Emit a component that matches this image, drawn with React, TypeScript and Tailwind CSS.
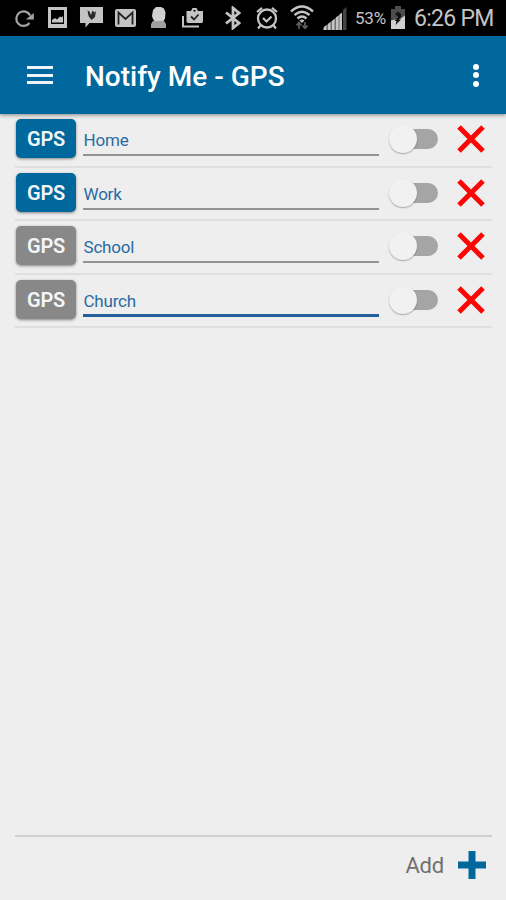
import React, { useState } from "react";
import { clsx } from "clsx";

interface Place {
  name: string;
  armed: boolean;
  focused?: boolean;
}

const PLACES: Place[] = [
  { name: "Home", armed: true },
  { name: "Work", armed: true },
  { name: "School", armed: false },
  { name: "Church", armed: false, focused: true },
];

function StatusBar() {
  return (
    <div className="flex h-9 shrink-0 items-start bg-black text-[#c4c4c4]">
      {/* Refresh */}
      <svg className="ml-[14px] mt-2 h-5 w-5 shrink-0 text-[#a3a3a3]" viewBox="0 0 20 20" fill="none">
        <path d="M16.200 7.500A7.300 7.300 0 1 0 15.500 15" stroke="currentColor" strokeWidth="2.200" />
        <path d="M19.800 5v6.500h-8z" fill="currentColor" />
      </svg>
      {/* Picture */}
      <svg className="ml-[14px] mt-[7px] h-[21px] w-[19px] shrink-0" viewBox="0 0 19 21">
        <path fill="currentColor" fillRule="evenodd" d="M0 0h19v21H0zM3 3v14h13V3z" />
        <path fill="currentColor" d="M4 15.500V13l3-2 2 1.500 3-3 1.500 1L15 9v6.500z" />
      </svg>
      {/* Message */}
      <svg className="ml-[13px] mt-[7px] h-[21px] w-[23px] shrink-0" viewBox="0 0 23 21">
        <path fill="currentColor" d="M0 0h23v16H9.500l-4 4.500V16H0z" />
        <path fill="#2a2a2a" d="M7.500 3.500l2 1L11 8l1.500-4.500 2 2L16 4l-1 6-3.500 3-3-4z" />
      </svg>
      {/* Mail */}
      <svg className="ml-[12px] mt-[9px] h-[18px] w-[21px] shrink-0" viewBox="0 0 21 18">
        <rect width="21" height="18" rx="2" fill="currentColor" />
        <path d="M3.500 15.500V3.500l7 6.500 7-6.500v12" fill="none" stroke="#222" strokeWidth="1.800" />
      </svg>
      {/* Bust */}
      <svg className="ml-[15px] mt-[7px] h-[21px] w-[15px] shrink-0" viewBox="0 0 15 21">
        <path fill="#d0d0d0" d="M5 0h5l3 1.500 1.500 4-.500 6-2 3.500H4l-2-3-1-3 1-6z" />
        <path fill="#a0a0a0" d="M2 14h11l2 3v4H0v-4z" />
      </svg>
      {/* Store */}
      <svg className="ml-4 mt-2 h-5 w-[21px] shrink-0" viewBox="0 0 21 20">
        <path fill="currentColor" fillRule="evenodd" d="M4.500 3H9L10.500 0h4L16 3h5v10.500L20 15H5.500l-1-1.500zM11.500 2v1.500h2V2z" />
        <path d="M9 8.500l3 3 4.500-5" fill="none" stroke="#222" strokeWidth="1.800" />
        <path d="M1 8v10.500h16" fill="none" stroke="currentColor" strokeWidth="2" />
      </svg>
      {/* Bluetooth */}
      <svg className="ml-[22px] mt-[6px] h-6 w-4 shrink-0" viewBox="0 0 16 24" fill="none">
        <path d="M1 6.500l13 10.500-6 5V2l6 5L1 17.500" stroke="currentColor" strokeWidth="2.800" />
      </svg>
      {/* Alarm */}
      <svg className="ml-[15px] mt-[6px] h-6 w-[22px] shrink-0" viewBox="0 0 22 24" fill="none">
        <circle cx="11" cy="12.500" r="9" stroke="currentColor" strokeWidth="2.300" />
        <path d="M1 6l5-4.200M21 6l-5-4.200M4.500 19.500L2 22.500M17.500 19.500l2.500 3" stroke="currentColor" strokeWidth="2.200" />
        <path d="M7 12l3.500 3.500 5-5" stroke="currentColor" strokeWidth="2.200" />
      </svg>
      {/* Wi-Fi */}
      <svg className="ml-[12px] mt-[5px] h-6 w-6 shrink-0" viewBox="0 0 24 24" fill="none">
        <path d="M1 6.500Q12-3.500 23 6.500M4.500 10q7.500-6.500 15 0M7.500 13.500q4.500-4 9 0" stroke="currentColor" strokeWidth="2.400" />
        <path d="M9.500 15.500q2.500-2 5 0L12 18z" fill="currentColor" />
        <path d="M9 24v-6m-2.500 2.500L9 17.500l2.500 3M15 17v6m-2.500-2.500l2.500 3 2.500-3" stroke="#5c5c5c" strokeWidth="1.800" />
      </svg>
      {/* Signal */}
      <svg className="ml-[9px] mt-[6px] h-6 w-6 shrink-0" viewBox="0 0 24 24" fill="currentColor">
        <path fill="#707070" d="M0 22L18 7.500V24H0z" />
        <path d="M1 21l2.500-2v5H1zM5 18l2.500-2v8H5zM9 15l2.500-2v11H9zM13 11.500l2.500-2V24H13zM16.500 8.500l2.500-2V24h-2.500z" />
        <path fill="#454545" d="M20 4l3.500-3v23H20z" />
      </svg>
      <span className="ml-[8px] mt-[7px] w-[33px] shrink-0 whitespace-nowrap text-[17px] leading-[23px] tracking-[-0.2px]">
        53%
      </span>
      {/* Battery */}
      <svg className="ml-[3px] mt-[6px] h-6 w-[14px] shrink-0" viewBox="0 0 14 24">
        <path fill="#4c4c4c" d="M4 0h6v3h4v12H0V3h4z" />
        <path fill="#d0d0d0" d="M0 14.500l4-1 3 1 7-5v13.500H0z" />
        <path fill="#111" d="M4 8l3-2.500L10 8v3l-2.500 2.500h2.500L4.500 19l1-4H3.500l4-4z" />
      </svg>
      <span className="ml-[9px] mt-[5px] whitespace-nowrap text-[23px] leading-7 tracking-[-0.7px]">6:26 PM</span>
    </div>
  );
}

function Toolbar() {
  return (
    <header className="z-10 flex h-[78px] shrink-0 items-center bg-[#00689d] px-[27px] text-white shadow-[0_1px_4px_rgba(0,0,0,0.45)]">
      <button aria-label="Menu" className="flex w-[26px] flex-col gap-[4.500px]">
        <span className="h-[3px] w-full bg-[#edf4fa]" />
        <span className="h-[3px] w-full bg-[#edf4fa]" />
        <span className="h-[3px] w-full bg-[#edf4fa]" />
      </button>
      <h1 className="ml-8 mt-[3px] whitespace-nowrap text-[28px] font-medium leading-8">
        Notify Me - GPS
      </h1>
      <button aria-label="More" className="ml-auto flex flex-col gap-[2.500px]">
        <span className="h-[6px] w-[6px] rounded-full bg-white" />
        <span className="h-[6px] w-[6px] rounded-full bg-white" />
        <span className="h-[6px] w-[6px] rounded-full bg-white" />
      </button>
    </header>
  );
}

function Toggle({ on, onChange }: { on: boolean; onChange: () => void }) {
  return (
    <button role="switch" aria-checked={on} onClick={onChange} className="ml-[10px] mt-[11px] flex h-7 w-[49px] items-center">
      <span className={clsx("z-10 h-7 w-7 shrink-0 rounded-full bg-[#f1f1f1] shadow-[0_1px_1.500px_rgba(0,0,0,0.3)]", on && "order-2")} />
      <span className="-ml-4 h-5 w-[37px] shrink-0 rounded-full bg-[#a5a5a5]" />
    </button>
  );
}

function PlaceRow({ place }: { place: Place }) {
  const [on, setOn] = useState(false);

  return (
    <li className="flex h-[53.500px] items-start border-b-2 border-[#dfdfdf]">
      <button
        className={clsx(
          "ml-px mt-[5px] h-[39px] w-[60px] shrink-0 rounded-[5px] text-[20px] font-semibold leading-[41px] tracking-[-0.2px] text-[#f3f6f8] shadow-[0_1px_3px_rgba(0,0,0,0.45)]",
          place.armed ? "bg-[#00689d]" : "bg-[#888888]"
        )}
      >
        GPS
      </button>
      <div
        className={clsx(
          "ml-[7px] flex h-[42px] w-[296px] shrink-0 items-end pl-[0.500px] text-[17px] leading-5 tracking-[-0.2px] text-[#2a6ba3]",
          place.focused ? "border-b-3 border-[#23609b] pb-[3px]" : "border-b-2 border-[#939393] pb-[4px]"
        )}
      >
        <span>{place.name}</span>
      </div>
      <Toggle on={on} onChange={() => setOn(!on)} />
      <button aria-label="Delete" className="ml-[19px] mt-[11px] h-7 w-7 shrink-0">
        <svg viewBox="0 0 28 28" className="h-7 w-7">
          <path d="M2 2l24 24M26 2L2 26" stroke="#fd0505" strokeWidth="5" />
        </svg>
      </button>
    </li>
  );
}

export default function App() {
  return (
    <div className="flex h-[900px] w-[506px] flex-col overflow-hidden bg-[#eeeeee] font-['Roboto',sans-serif]">
      <StatusBar />
      <Toolbar />

      <ul className="ml-[15px] mr-[14px] flex-1">
        {PLACES.map((place) => (
          <PlaceRow key={place.name} place={place} />
        ))}
      </ul>

      {/* Footer */}
      <footer className="ml-[15px] mr-[14px] flex h-[65px] shrink-0 items-start justify-end border-t-2 border-[#cfcfcf] pr-[6px]">
        <span className="mt-[15px] text-[22px] leading-7 tracking-[-0.2px] text-[#707070]">Add</span>
        <button aria-label="Add" className="ml-[14px] mt-[14px] h-7 w-7">
          <svg viewBox="0 0 28 28" className="h-7 w-7">
            <path fill="#00689d" d="M10.500 0h7v10.500H28v7H17.500V28h-7V17.500H0v-7h10.500z" />
          </svg>
        </button>
      </footer>
    </div>
  );
}
